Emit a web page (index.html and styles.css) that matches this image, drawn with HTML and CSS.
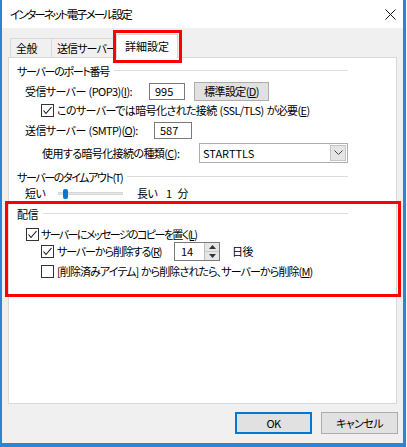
FILE: index.html
```html
<!DOCTYPE html>
<html lang="ja">
<head>
    <meta charset="UTF-8">
    <meta name="viewport" content="width=device-width, initial-scale=1.0">
    <title>インターネット電子メール設定</title>
    <link rel="stylesheet" href="styles.css">
</head>
<body>
    <div class="window">
        <div class="titlebar">
            <span class="title">インターネット電子メール設定</span>
            <svg class="close" width="11" height="11" viewBox="0 0 11 11">
                <path d="M0.5 0.5L10.5 10.5M10.5 0.5L0.5 10.5" stroke="#111" stroke-width="1"/>
            </svg>
        </div>
        <div class="dialog">
            <div class="tabs">
                <div class="tab tab-general">全般</div>
                <div class="tab tab-outgoing">送信サーバー</div>
                <div class="tab tab-active">詳細設定</div>
            </div>
            <div class="panel">
                <!-- ports -->
                <div class="group-title gt-ports"><span>サーバーのポート番号</span><span class="rule"></span></div>
                <div class="row row-pop">
                    <span class="label w-pop">受信サーバー (POP3)(<u>I</u>):</span>
                    <span class="textbox tb-pop">995</span>
                    <span class="button btn-default">標準設定(<u>D</u>)</span>
                </div>
                <div class="row row-ssl">
                    <span class="check checked"><svg width="11" height="11" viewBox="0 0 11 11"><path d="M1.5 5.5L4 8.5L9.5 2" fill="none" stroke="#111" stroke-width="1.1"/></svg></span>
                    <span class="label">このサーバーでは暗号化された接続 (SSL/TLS) が必要(<u>E</u>)</span>
                </div>
                <div class="row row-smtp">
                    <span class="label w-smtp">送信サーバー (SMTP)(<u>O</u>):</span>
                    <span class="textbox tb-smtp">587</span>
                </div>
                <div class="row row-enc">
                    <span class="label w-enc">使用する暗号化接続の種類(<u>C</u>):</span>
                    <span class="select">
                        <span class="select-value">STARTTLS</span>
                        <span class="select-btn"><svg width="9" height="5" viewBox="0 0 9 5"><path d="M0.5 0.5L4.5 4.5L8.5 0.5" fill="none" stroke="#444" stroke-width="1"/></svg></span>
                    </span>
                </div>

                <!-- timeout -->
                <div class="group-title gt-timeout"><span>サーバーのタイムアウト(T)</span><span class="rule"></span></div>
                <div class="row row-slider">
                    <span class="label w-short">短い</span>
                    <span class="slider"><span class="slider-track"></span><span class="slider-thumb"></span></span>
                    <span class="label w-long">長い</span>
                    <span class="label minutes">1 分</span>
                </div>

                <!-- delivery -->
                <div class="group-title gt-delivery"><span>配信</span><span class="rule"></span></div>
                <div class="row row-leave">
                    <span class="check checked"><svg width="11" height="11" viewBox="0 0 11 11"><path d="M1.5 5.5L4 8.5L9.5 2" fill="none" stroke="#111" stroke-width="1.1"/></svg></span>
                    <span class="label">サーバーにメッセージのコピーを置く(<u>L</u>)</span>
                </div>
                <div class="row row-remove">
                    <span class="check checked"><svg width="11" height="11" viewBox="0 0 11 11"><path d="M1.5 5.5L4 8.5L9.5 2" fill="none" stroke="#111" stroke-width="1.1"/></svg></span>
                    <span class="label w-remove">サーバーから削除する(<u>R</u>)</span>
                    <span class="spin">
                        <span class="spin-value">14</span>
                        <span class="spin-btns">
                            <span class="spin-btn"><svg width="7" height="4" viewBox="0 0 7 4"><path d="M0 4L3.5 0L7 4Z" fill="#333"/></svg></span>
                            <span class="spin-btn"><svg width="7" height="4" viewBox="0 0 7 4"><path d="M0 0L3.5 4L7 0Z" fill="#333"/></svg></span>
                        </span>
                    </span>
                    <span class="label">日後</span>
                </div>
                <div class="row row-deleted">
                    <span class="check"></span>
                    <span class="label">[削除済みアイテム] から削除されたら、サーバーから削除(<u>M</u>)</span>
                </div>
            </div>
            <div class="buttons">
                <span class="button btn-ok">OK</span>
                <span class="button btn-cancel">キャンセル</span>
            </div>
        </div>
    </div>

    <!-- annotation boxes -->
    <div class="mark mark-tab"></div>
    <div class="mark mark-delivery"></div>
</body>
</html>
```

FILE: styles.css
```css
* {
    box-sizing: border-box;
}
body {
    margin: 0;
    background: #fff;
    font-family: "Noto Sans CJK JP", "Noto Sans", sans-serif;
    font-size: 11px;
    font-feature-settings: "palt";
    letter-spacing: -0.6px;
    word-spacing: 1px;
    color: #000;
}
u {
    text-decoration-thickness: 1px;
    text-underline-offset: 1px;
}
.window {
    width: 406px;
    height: 447px;
    border: solid #2b85d4;
    border-width: 0 3px 4px 2px;
    background: #f0f0f0;
    display: flex;
    flex-direction: column;
}
.titlebar {
    height: 28px;
    background: #fff;
    display: flex;
    align-items: center;
    justify-content: space-between;
    padding: 0 7px 0 8px;
}
.title {
    font-size: 11.5px;
    letter-spacing: -2px;
}
.dialog {
    flex: 1;
    padding: 7px 6px 0 6px;
}

/* tabs */
.tabs {
    display: flex;
    align-items: flex-end;
    height: 22px;
    padding-left: 2px;
}
.tab {
    height: 19px;
    line-height: 18px;
    border: 1px solid #d9d9d9;
    border-bottom: none;
    background: #f0f0f0;
    white-space: nowrap;
}
.tab-general {
    width: 42px;
    padding-left: 5px;
}
.tab-outgoing {
    width: 66px;
    padding-left: 5px;
    border-left: none;
    letter-spacing: -0.9px;
}
.tab-active {
    width: 62px;
    height: 24px;
    margin-left: -2px;
    margin-bottom: -1px;
    background: #fff;
    text-align: center;
    line-height: 22px;
    letter-spacing: 0;
    position: relative;
}

/* panel */
.panel {
    height: 347px;
    border: 1px solid #d9d9d9;
    background: #fff;
    padding: 0 0 0 8px;
    display: flex;
    flex-direction: column;
}
.group-title {
    width: 331px;
    height: 16px;
    display: flex;
    align-items: center;
    white-space: nowrap;
}
.rule {
    flex: 1;
    height: 1px;
    margin-left: 5px;
    background: #dcdcdc;
    position: relative;
    top: -1px;
}
.gt-ports { margin-top: 5px; letter-spacing: -1.3px; }
.gt-timeout { margin-top: 6px; letter-spacing: -1.4px; }
.gt-delivery { margin-top: 6px; }

.row {
    display: flex;
    align-items: center;
    white-space: nowrap;
}
.row-pop { margin-top: 3px; height: 18px; padding-left: 8px; }
.row-ssl { margin-top: 3px; height: 14px; padding-left: 24px; gap: 3px; }
.row-smtp { margin-top: 4px; height: 18px; padding-left: 8px; }
.row-enc { margin-top: 3px; height: 21px; padding-left: 25px; }
.row-slider { margin-top: 1px; height: 14px; padding-left: 8px; }
.row-leave { margin-top: 5px; height: 14px; padding-left: 9px; gap: 2px; }
.row-leave .label { letter-spacing: -1.6px; }
.row-remove { margin-top: 1px; height: 18px; padding-left: 24px; gap: 3px; }
.row-deleted { margin-top: 4px; height: 14px; padding-left: 24px; gap: 3px; }
.row-deleted .label { letter-spacing: -0.9px; }

.w-pop { width: 124px; }
.w-smtp { width: 129px; }
.w-enc { width: 157px; }
.w-short { width: 33px; }
.w-long { width: 29px; }
.w-remove { width: 114px; letter-spacing: -1.1px; }
.minutes { letter-spacing: 0; word-spacing: 3px; }

/* controls */
.check {
    width: 13px;
    height: 13px;
    border: 1px solid #333;
    background: #fff;
    display: flex;
    align-items: center;
    justify-content: center;
}
.textbox {
    height: 17px;
    border: 1px solid #7a7a7a;
    background: #fff;
    padding-left: 5px;
    line-height: 15px;
    letter-spacing: 0;
}
.tb-pop { width: 36px; }
.tb-smtp { width: 38px; }
.button {
    display: flex;
    align-items: center;
    justify-content: center;
    background: #e1e1e1;
    border: 1px solid #adadad;
}
.btn-default {
    width: 75px;
    height: 19px;
    margin-left: 9px;
}
.select {
    width: 149px;
    height: 20px;
    border: 1px solid #adadad;
    background: #fff;
    display: flex;
    align-items: center;
    justify-content: space-between;
    padding: 0 1px 0 3px;
    letter-spacing: 0;
}
.select-btn {
    width: 16px;
    height: 16px;
    background: #e5e5e5;
    border: 1px solid #c4c4c4;
    display: flex;
    align-items: center;
    justify-content: center;
}
.slider {
    width: 65px;
    height: 12px;
    position: relative;
    display: flex;
    align-items: center;
    margin-right: 14px;
}
.slider-track {
    width: 100%;
    height: 3px;
    background: #e7e7e7;
    border: 1px solid #d6d6d6;
}
.slider-thumb {
    position: absolute;
    left: 5px;
    top: 2px;
    width: 5px;
    height: 10px;
    border-radius: 2px;
    background: #0078d7;
}
.spin {
    width: 46px;
    height: 19px;
    display: flex;
    border: 1px solid #7a7a7a;
    background: #fff;
    margin-right: 9px;
    letter-spacing: 0;
}
.spin-value {
    flex: 1;
    padding-left: 6px;
    line-height: 17px;
    border-right: 1px solid #bdbdbd;
}
.spin-btns {
    width: 14px;
    display: flex;
    flex-direction: column;
}
.spin-btn {
    flex: 1;
    display: flex;
    align-items: center;
    justify-content: center;
    background: #e6e6e6;
}
.spin-btn + .spin-btn {
    border-top: 1px solid #c8c8c8;
}

/* bottom buttons */
.buttons {
    display: flex;
    justify-content: flex-end;
    gap: 9px;
    margin-top: 8px;
    margin-right: -1px;
}
.btn-ok,
.btn-cancel {
    width: 77px;
    height: 22px;
}
.btn-ok {
    border: 2px solid #0078d7;
}

/* red annotation frames */
.mark {
    position: absolute;
    border: 3px solid #f00;
}
.mark-tab {
    left: 113px;
    top: 30px;
    width: 69px;
    height: 33px;
}
.mark-delivery {
    left: 5px;
    top: 201px;
    width: 396px;
    height: 96px;
}
```
